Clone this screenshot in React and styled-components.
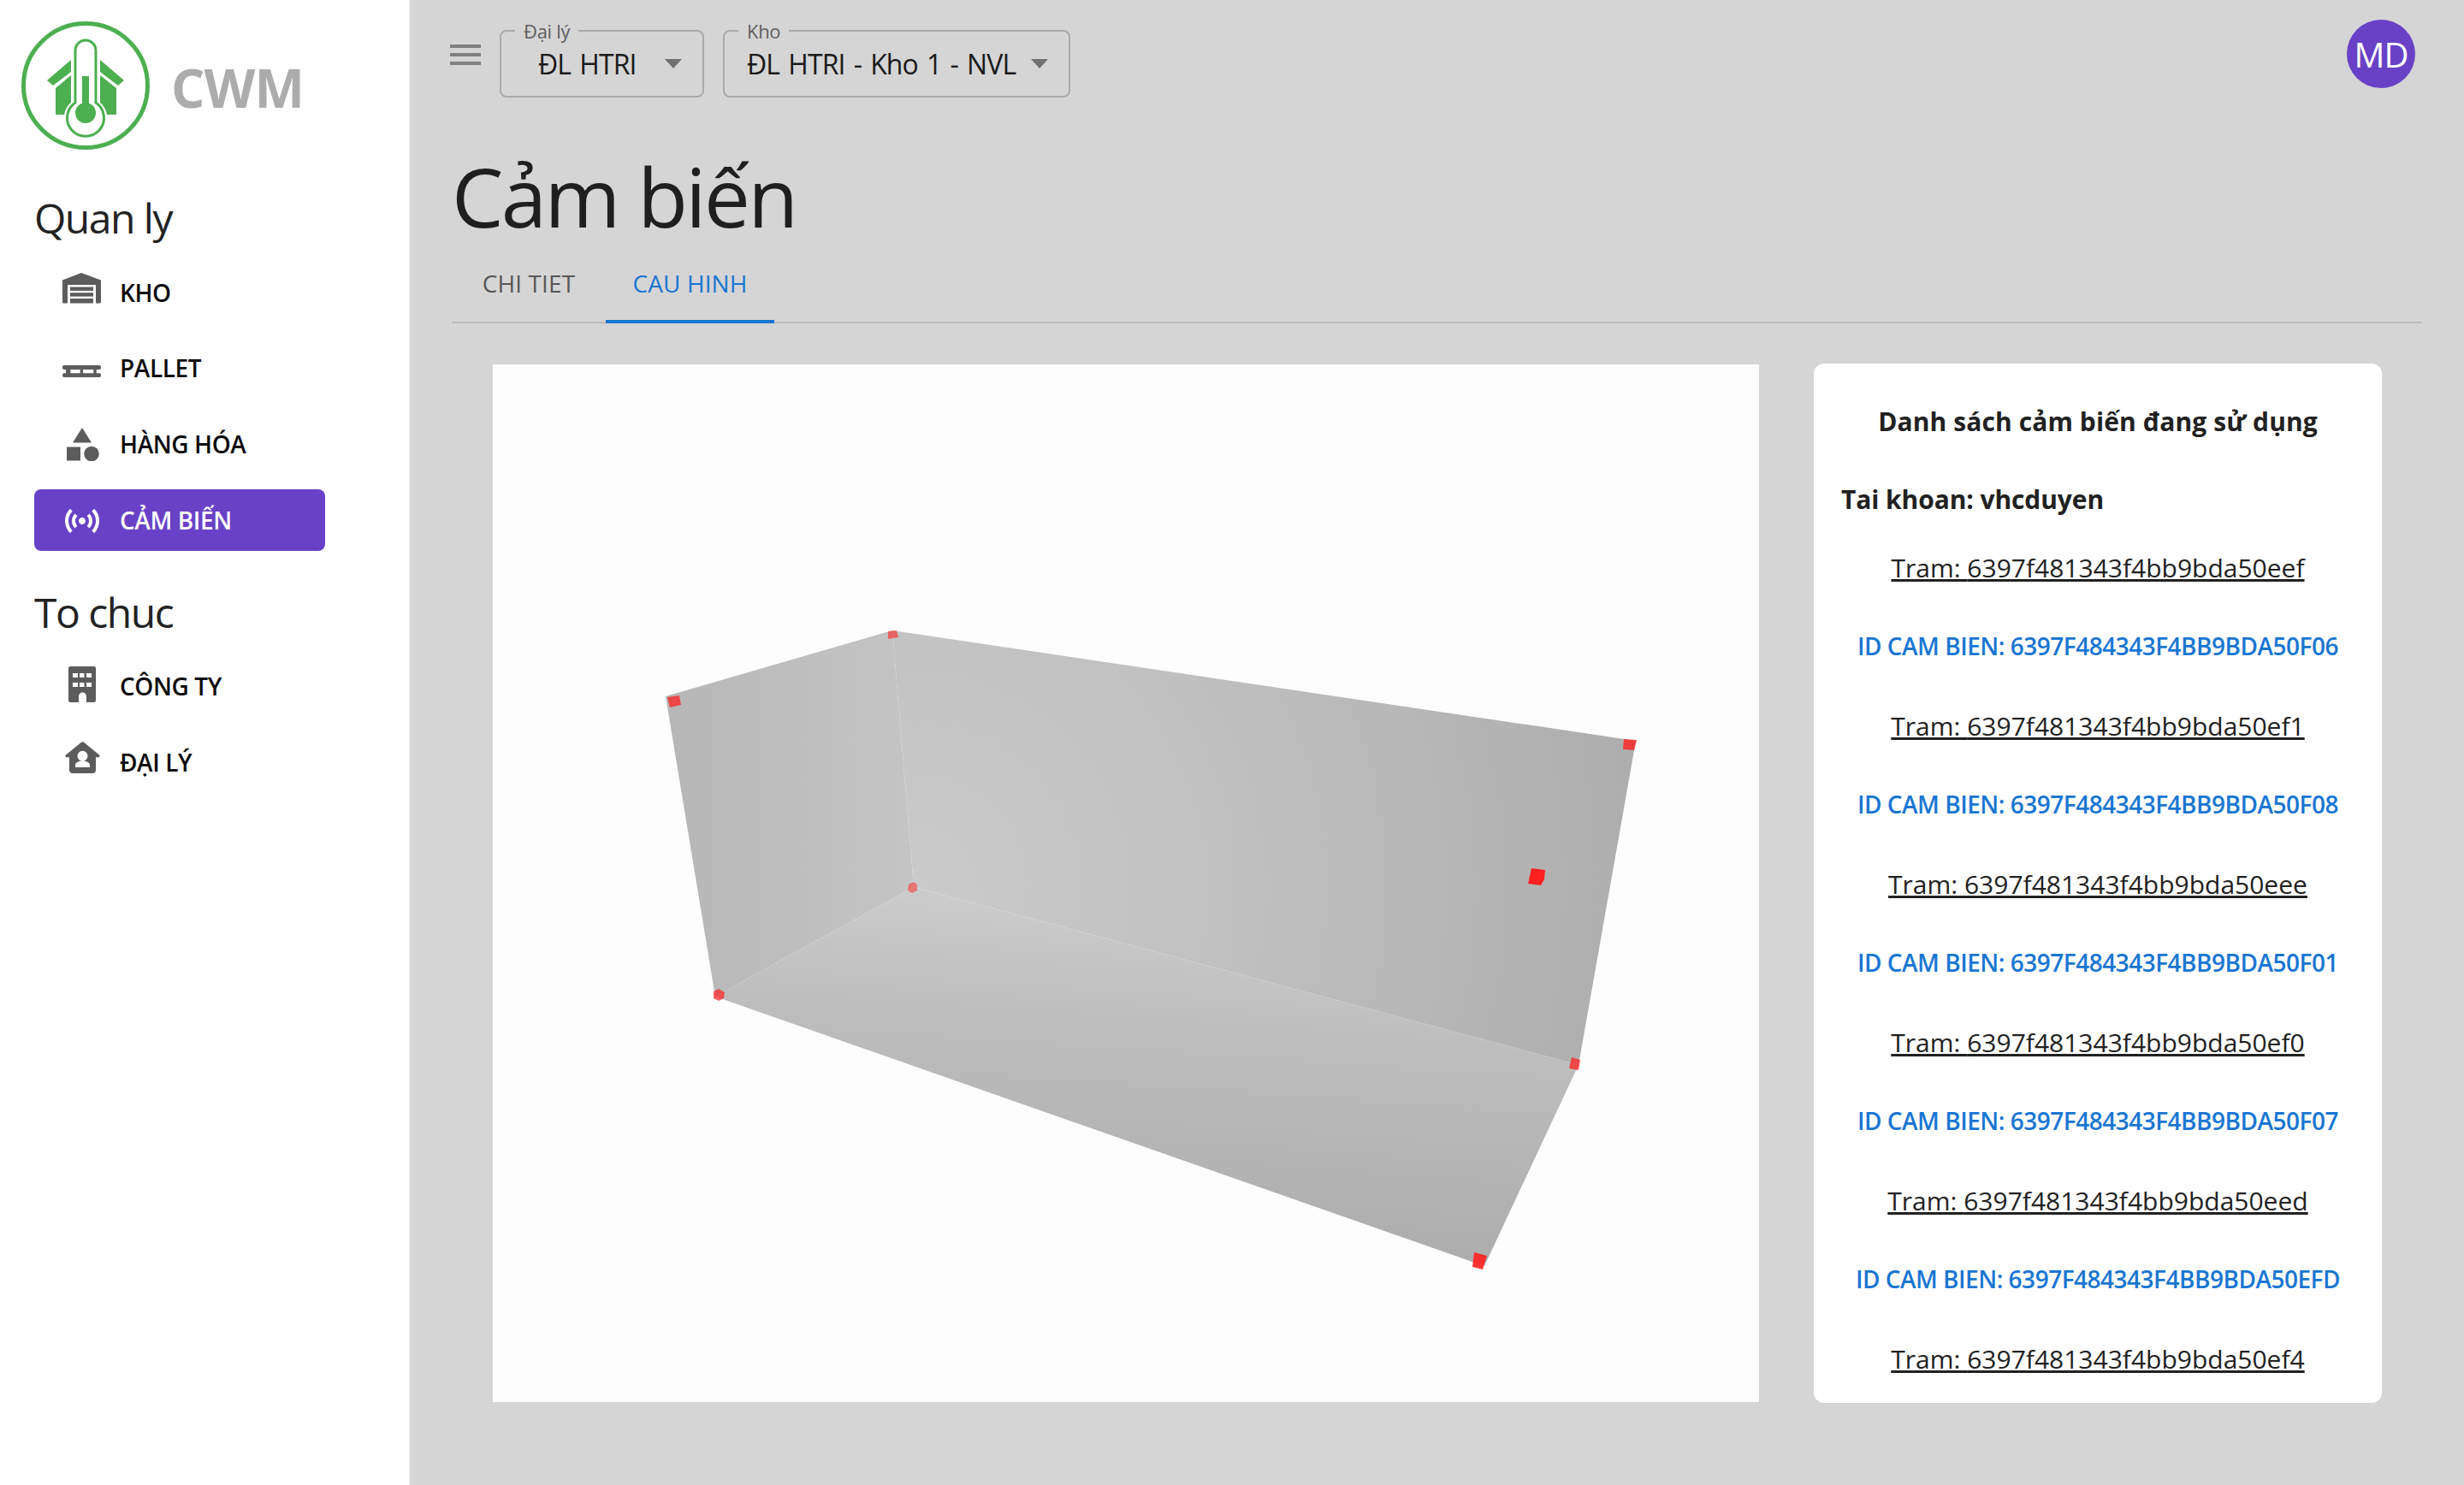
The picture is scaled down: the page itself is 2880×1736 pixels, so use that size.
import React from "react";
import styled, { createGlobalStyle } from "styled-components";
import { MdSensors } from "react-icons/md";

const FONT = `"Open Sans", "Noto Sans", "Liberation Sans", sans-serif`;

const Global = createGlobalStyle`
  html, body { margin: 0; padding: 0; background: #d5d5d5; }
  body { font-family: ${FONT}; }
  * { box-sizing: border-box; }
`;

const Shell = styled.div`
  display: grid;
  grid-template-columns: 480px 1fr;
  width: 2880px;
  height: 1736px;
  overflow: hidden;
`;

const Sidebar = styled.aside`
  background: #fff;
  border-right: 2px solid #e3e3e3;
  display: flex;
  flex-direction: column;
`;

const Brand = styled.div`
  display: flex;
  align-items: center;
  height: 200px;
`;

const BrandName = styled.span`
  font-size: 62px;
  font-weight: 700;
  color: #acacac;
  letter-spacing: -1px;
  margin: 4px 0 0 0;
`;

const NavSection = styled.nav`
  display: flex;
  flex-direction: column;
  padding: ${(p) => p.$top}px 98px 0 40px;
  gap: 16.7px;
`;

const NavHeading = styled.h3`
  margin: 0 0 6px;
  font-size: 48px;
  line-height: 56px;
  font-weight: 400;
  color: #222;
  letter-spacing: -1.5px;
`;

const NavItem = styled.a`
  display: flex;
  align-items: center;
  gap: 20px;
  height: 72px;
  padding-left: 30px;
  border-radius: 8px;
  background: ${(p) => (p.$active ? "#6941c6" : "transparent")};
  color: ${(p) => (p.$active ? "#fff" : "#0c0c0c")};
  font-size: 28px;
  font-weight: 600;
  letter-spacing: -0.4px;
`;

const NavIcon = styled.span`
  display: flex;
  align-items: center;
  justify-content: center;
  width: 50px;
  margin-top: ${(p) => p.$dy || 0}px;
  padding-left: ${(p) => p.$dx || 0}px;
  color: ${(p) => (p.$active ? "#fff" : "#5c5c5c")};
`;

const Main = styled.main`
  display: flex;
  flex-direction: column;
  padding: 0 49px 0 48px;
`;

const TopBar = styled.header`
  display: flex;
  align-items: flex-start;
  padding-top: 23px;
`;

const MenuButton = styled.svg`
  width: 36px;
  height: 24px;
  margin: 29px 22px 0 -2px;
  fill: #808080;
`;

const SelectBox = styled.fieldset`
  margin: 0 22px 0 0;
  padding: 0 24px 0 26px;
  width: ${(p) => p.$w}px;
  height: 91px;
  border: 2px solid #a9a9a9;
  border-radius: 8px;
  min-inline-size: 0;
`;

const SelectLabel = styled.legend`
  margin-left: -10px;
  padding: 0 10px;
  font-size: 22px;
  line-height: 26px;
  color: #5e5e5e;
  letter-spacing: -0.3px;
`;

const SelectRow = styled.div`
  display: flex;
  align-items: center;
  justify-content: space-between;
  height: 50px;
  font-size: 32px;
  color: #1a1a1a;
  letter-spacing: -0.9px;
  word-spacing: 2.7px;
  white-space: nowrap;
`;

const SelectValue = styled.span`
  margin-left: ${(p) => p.$inset || 0}px;
`;

const Caret = styled.i`
  display: block;
  width: 0;
  height: 0;
  border-left: 10.5px solid transparent;
  border-right: 10.5px solid transparent;
  border-top: 11px solid #707070;
`;

const Avatar = styled.div`
  width: 80px;
  height: 80px;
  margin-left: auto;
  margin-right: 8px;
  border-radius: 50%;
  background: #6941c6;
  color: #fff;
  font-size: 40px;
  display: flex;
  align-items: center;
  justify-content: center;
  letter-spacing: -1px;
`;

const Title = styled.h1`
  margin: 51px 0 0;
  font-size: 96px;
  line-height: 128px;
  font-weight: 400;
  color: #1f1f1f;
  letter-spacing: -2.6px;
`;

const Tabs = styled.div`
  display: flex;
  height: 76px;
  margin-top: 9px;
  border-bottom: 2px solid #bdbdbd;
`;

const Tab = styled.div`
  display: flex;
  align-items: center;
  justify-content: center;
  height: 76px;
  width: ${(p) => p.$w}px;
  font-size: 28px;
  font-weight: 500;
  letter-spacing: 0.1px;
  color: ${(p) => (p.$active ? "#1976d2" : "#585858")};
  border-bottom: ${(p) => (p.$active ? "4px solid #1976d2" : "none")};
  padding-bottom: ${(p) => (p.$active ? "15px" : "19px")};
`;

const Content = styled.section`
  display: flex;
  gap: 64px;
  margin: 48px 0 0 48px;
`;

const Viewer = styled.div`
  width: 1480px;
  height: 1213px;
  background: #fdfdfd;
`;

const Card = styled.div`
  width: 664px;
  height: 1215px;
  margin-top: -1px;
  background: #fff;
  border-radius: 12px;
  display: flex;
  flex-direction: column;
  align-items: center;
  overflow: hidden;
  padding-top: 46px;
`;

const CardTitle = styled.h4`
  margin: 0;
  font-size: 30px;
  line-height: 44px;
  font-weight: 700;
  color: #212121;
  letter-spacing: 0.1px;
`;

const Account = styled.h5`
  align-self: flex-start;
  margin: 47px 0 0 32px;
  font-size: 30px;
  line-height: 44px;
  font-weight: 700;
  color: #212121;
  letter-spacing: -0.1px;
`;

const StationList = styled.div`
  display: flex;
  flex-direction: column;
  align-items: center;
  margin-top: 36px;
`;

const Station = styled.a`
  font-size: 30px;
  line-height: 44px;
  height: 44px;
  color: #212121;
  text-decoration: underline;
  margin-bottom: 47px;
`;

const SensorId = styled.div`
  font-size: 28px;
  line-height: 44px;
  height: 44px;
  font-weight: 600;
  color: #1976d2;
  letter-spacing: -0.5px;
  margin-bottom: 50px;
`;

const Logo = () => (
  <svg width="200" height="200" viewBox="0 0 200 200">
    <circle cx="100" cy="100" r="72.5" fill="none" stroke="#4caf50" strokeWidth="5" />
    <g fill="#4caf50">
      <polygon points="55,94 83,70 83,84 62,100" />
      <polygon points="145,94 117,70 117,84 138,100" />
      <polygon points="65,103 83,88 83,134 65,134" />
      <polygon points="136,103 117,88 117,134 136,134" />
    </g>
    <path
      d="M87 121V59a13 13 0 0 1 26 0v62a22 22 0 1 1-26 0z"
      fill="#fff"
      stroke="#fff"
      strokeWidth="7"
    />
    <path
      d="M88 120V59a12 12 0 0 1 24 0v61a21.5 21.5 0 1 1-24 0z"
      fill="#fff"
      stroke="#4caf50"
      strokeWidth="3"
    />
    <rect x="96" y="89" width="8" height="38" fill="#4caf50" />
    <circle cx="100" cy="132" r="12" fill="#4caf50" />
  </svg>
);

const WarehouseIcon = () => (
  <svg width="45" height="36" viewBox="0 0 45 36" fill="currentColor">
    <path fillRule="evenodd" d="M22 0 45 8.5V34a1.5 1.5 0 0 1-1.5 1.5H39V14H6v21.5H1.5A1.5 1.5 0 0 1 0 34V8.5z" />
    <rect x="9" y="16.5" width="27" height="4.4" />
    <rect x="9" y="23.2" width="27" height="4.4" />
    <rect x="9" y="30" width="27" height="5.5" />
  </svg>
);

const PalletIcon = () => (
  <svg width="45" height="14" viewBox="0 0 45 14" fill="currentColor">
    <rect x="0" y="0" width="45" height="5" rx="2" />
    <rect x="0" y="9.3" width="45" height="4.7" rx="2" />
    <rect x="4" y="4" width="5.4" height="6" />
    <rect x="20.7" y="4" width="3.4" height="6" />
    <rect x="36.3" y="4" width="3.4" height="6" />
  </svg>
);

const ShapesIcon = () => (
  <svg width="38" height="39" viewBox="0 0 38 39" fill="currentColor">
    <polygon points="18,0 29,17.5 7,17.5" />
    <rect x="0" y="22.5" width="16" height="16" />
    <circle cx="29" cy="30.5" r="8.8" />
  </svg>
);

const BuildingIcon = () => (
  <svg width="32" height="42" viewBox="0 0 32 42" fill="currentColor">
    <path
      fillRule="evenodd"
      d="M2 0h28a2 2 0 0 1 2 2v38a2 2 0 0 1-2 2h-9v-7a4.5 4.5 0 0 0-9 0v7H2a2 2 0 0 1-2-2V2a2 2 0 0 1 2-2zM5 8v5h6V8zm8 0v5h5.500V8zm8 0v5h6V8zM5 19v5h6v-5zm8 0v5h5.500v-5zm8 0v5h6v-5z"
    />
  </svg>
);

const HouseUserIcon = () => (
  <svg width="41" height="37" viewBox="0 0 41 37" fill="currentColor">
    <path
      fillRule="evenodd"
      d="M19 .8a2.300 2.300 0 0 1 3 0l18 14.600c1.200 1 .6 2.800-1 2.800h-3V33a4 4 0 0 1-4 4H9a4 4 0 0 1-4-4V18.200H2c-1.600 0-2.200-1.800-1-2.800zM20.500 10.700a6 6 0 1 0 0 12 6 6 0 0 0 0-12zM12 30h17v-2.500c0-3.500-4.500-5-8.500-5s-8.500 1.500-8.500 5z"
    />
  </svg>
);

const Scene = () => (
  <svg width="1480" height="1213" viewBox="576 426 1480 1213">
    <defs>
      <linearGradient id="wallLeft" gradientUnits="userSpaceOnUse" x1="790" y1="1000" x2="1068" y2="1000">
        <stop offset="0" stopColor="#b7b7b7" />
        <stop offset="1" stopColor="#c5c5c5" />
      </linearGradient>
      <radialGradient id="wallBack" gradientUnits="userSpaceOnUse" cx="1068" cy="1037" r="860">
        <stop offset="0" stopColor="#cacaca" />
        <stop offset="0.35" stopColor="#c3c3c3" />
        <stop offset="1" stopColor="#adadad" />
      </radialGradient>
      <linearGradient id="floor" gradientUnits="userSpaceOnUse" x1="1068" y1="1037" x2="1041" y2="1432">
        <stop offset="0" stopColor="#cccccc" />
        <stop offset="0.35" stopColor="#bebebe" />
        <stop offset="1" stopColor="#adadad" />
      </linearGradient>
    </defs>
    <polygon points="778,814 1043,737 1068,1037 836,1165" fill="url(#wallLeft)" />
    <polygon points="1043,737 1912,866 1845,1245 1068,1037" fill="url(#wallBack)" />
    <polygon points="1068,1037 1845,1245 1735,1480 836,1165" fill="url(#floor)" />
    <g fill="#ff2020">
      <polygon points="780,815 794,813 796,824 783,827" fillOpacity="0.75" />
      <polygon points="1038,738 1048,737 1050,745 1038,747" fillOpacity="0.6" />
      <polygon points="1062,1034 1068,1031 1072,1034 1072,1041 1066,1044 1061,1041" fillOpacity="0.5" />
      <polygon points="834,1159 840,1156 847,1160 846,1167 840,1170 834,1167" fillOpacity="0.7" />
      <polygon points="1898,864 1913,865 1910,877 1897,876" fillOpacity="0.8" />
      <polygon points="1790,1015 1806,1017 1805,1028 1801,1035 1786,1033" />
      <polygon points="1837,1236 1847,1239 1845,1251 1834,1249" fillOpacity="0.75" />
      <polygon points="1723,1464 1738,1468 1733,1484 1721,1481" fillOpacity="0.9" />
    </g>
  </svg>
);

const stations = [
  ["6397f481343f4bb9bda50eef", "6397F484343F4BB9BDA50F06"],
  ["6397f481343f4bb9bda50ef1", "6397F484343F4BB9BDA50F08"],
  ["6397f481343f4bb9bda50eee", "6397F484343F4BB9BDA50F01"],
  ["6397f481343f4bb9bda50ef0", "6397F484343F4BB9BDA50F07"],
  ["6397f481343f4bb9bda50eed", "6397F484343F4BB9BDA50EFD"],
  ["6397f481343f4bb9bda50ef4", null],
];

export default function App() {
  return (
    <Shell>
      <Global />
      <Sidebar>
        <Brand>
          <Logo />
          <BrandName>CWM</BrandName>
        </Brand>
        <NavSection $top={27}>
          <NavHeading>Quan ly</NavHeading>
          <NavItem>
            <NavIcon $dy={-9}><WarehouseIcon /></NavIcon>KHO
          </NavItem>
          <NavItem>
            <NavIcon $dy={8}><PalletIcon /></NavIcon>PALLET
          </NavItem>
          <NavItem>
            <NavIcon $dx={4}><ShapesIcon /></NavIcon>HÀNG HÓA
          </NavItem>
          <NavItem $active>
            <NavIcon $active $dy={2} $dx={2}><MdSensors size={48} /></NavIcon>CẢM BIẾN
          </NavItem>
        </NavSection>
        <NavSection $top={44}>
          <NavHeading>To chuc</NavHeading>
          <NavItem>
            <NavIcon $dy={-4} $dx={2}><BuildingIcon /></NavIcon>CÔNG TY
          </NavItem>
          <NavItem>
            <NavIcon $dy={-11} $dx={3}><HouseUserIcon /></NavIcon>ĐẠI LÝ
          </NavItem>
        </NavSection>
      </Sidebar>
      <Main>
        <TopBar>
          <MenuButton viewBox="0 0 36 24">
            <rect y="0" width="36" height="4" />
            <rect y="10" width="36" height="4" />
            <rect y="20" width="36" height="4" />
          </MenuButton>
          <SelectBox $w={239}>
            <SelectLabel>Đại lý</SelectLabel>
            <SelectRow>
              <SelectValue $inset={17}>ĐL HTRI</SelectValue>
              <Caret />
            </SelectRow>
          </SelectBox>
          <SelectBox $w={406}>
            <SelectLabel>Kho</SelectLabel>
            <SelectRow>
              <SelectValue>ĐL HTRI - Kho 1 - NVL</SelectValue>
              <Caret />
            </SelectRow>
          </SelectBox>
          <Avatar>MD</Avatar>
        </TopBar>
        <Title>Cảm biến</Title>
        <Tabs>
          <Tab $w={180}>CHI TIET</Tab>
          <Tab $w={197} $active>CAU HINH</Tab>
        </Tabs>
        <Content>
          <Viewer><Scene /></Viewer>
          <Card>
            <CardTitle>Danh sách cảm biến đang sử dụng</CardTitle>
            <Account>Tai khoan: vhcduyen</Account>
            <StationList>
              {stations.map(([tram, id]) => (
                <React.Fragment key={tram}>
                  <Station>Tram: {tram}</Station>
                  {id && <SensorId>ID CAM BIEN: {id}</SensorId>}
                </React.Fragment>
              ))}
            </StationList>
          </Card>
        </Content>
      </Main>
    </Shell>
  );
}
